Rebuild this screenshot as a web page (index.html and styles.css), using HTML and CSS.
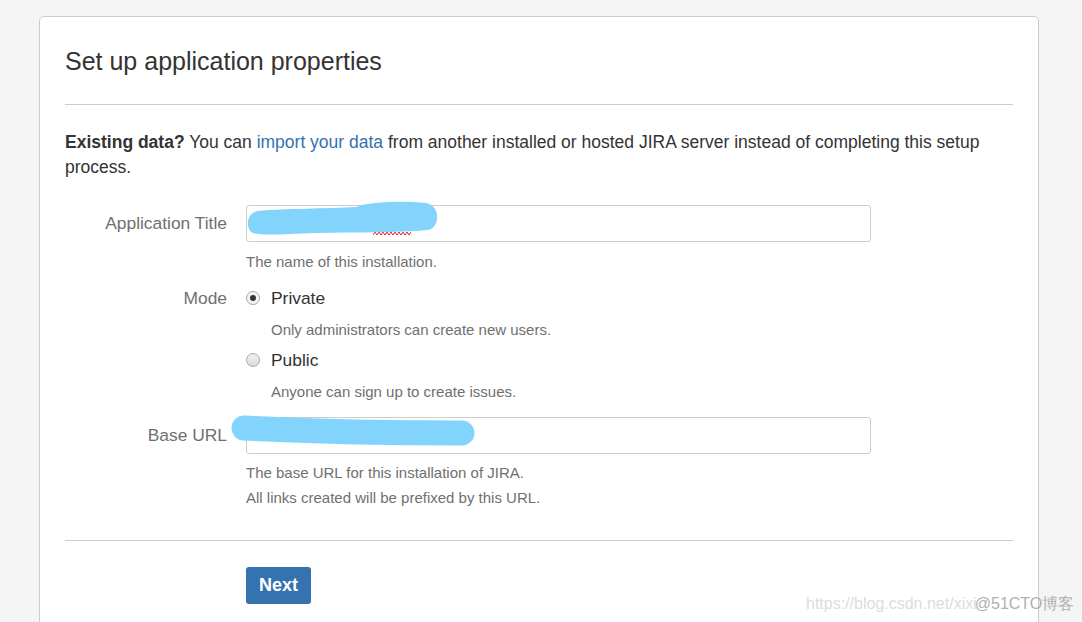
FILE: index.html
```html
<!DOCTYPE html>
<html lang="en">
<head>
  <meta charset="UTF-8">
  <title>Set up application properties</title>
  <link rel="stylesheet" href="styles.css">
</head>
<body>
  <div class="setup-card">
    <h1>Set up application properties</h1>
    <hr>
    <p class="intro"><strong>Existing data?</strong> You can <a href="#">import your data</a> from another installed or hosted JIRA server instead of completing this setup process.</p>

    <form class="setup-form">
      <div class="field">
        <label class="field-label" for="appTitle">Application Title</label>
        <div class="field-body">
          <div class="input-wrap">
            <input type="text" id="appTitle" class="text-input">
            <svg class="squiggle" width="40" height="6" viewBox="0 0 40 6">
              <polyline points="0,4 2,1 4,4 6,1 8,4 10,1 12,4 14,1 16,4 18,1 20,4 22,1 24,4 26,1 28,4 30,1 32,4 34,1 36,4 38,1" fill="none" stroke="#d22" stroke-width="1"/>
            </svg>
            <svg class="scribble scribble-title" width="200" height="40" viewBox="0 -5 200 40">
              <path d="M12 6 C40 3 80 4 110 2 C125 -4 160 -4 180 -2 C194 0 195 22 182 25 C150 28 110 27 70 28 C40 29 16 31 7 28 C-1 24 0 8 12 6 Z" fill="#82d4fc"/>
            </svg>
          </div>
          <div class="help">The name of this installation.</div>
        </div>
      </div>

      <div class="field field-mode">
        <span class="field-label label-mode">Mode</span>
        <div class="field-body">
          <label class="radio-option">
            <span class="radio checked"></span>
            <span>Private</span>
          </label>
          <div class="help option-help">Only administrators can create new users.</div>
          <label class="radio-option radio-second">
            <span class="radio"></span>
            <span>Public</span>
          </label>
          <div class="help option-help">Anyone can sign up to create issues.</div>
        </div>
      </div>

      <div class="field field-url">
        <label class="field-label" for="baseUrl">Base URL</label>
        <div class="field-body">
          <div class="input-wrap">
            <input type="text" id="baseUrl" class="text-input">
            <svg class="scribble scribble-url" width="260" height="40" viewBox="-20 -5 260 40">
              <path d="M-2 11 C60 14 150 16 216 16" fill="none" stroke="#82d4fc" stroke-width="25" stroke-linecap="round"/>
            </svg>
          </div>
          <div class="help help-url">The base URL for this installation of JIRA.<br>All links created will be prefixed by this URL.</div>
        </div>
      </div>

      <hr class="form-rule">
      <div class="buttons">
        <button type="button" class="btn-next">Next</button>
      </div>
    </form>
  </div>

  <div class="watermark">
    <span class="wm-url">https://blog.csdn.net/xixi</span><span class="wm-site">@51CTO博客</span>
  </div>
</body>
</html>
```

FILE: styles.css
```css
body {
  margin: 0;
  padding: 16px 0 0 39px;
  background-color: #f5f5f5;
  font-family: "Liberation Sans", Arial, sans-serif;
  color: #333;
  overflow: hidden;
  height: 606px;
}

.setup-card {
  box-sizing: border-box;
  width: 1000px;
  background-color: #fff;
  border: 1px solid #ccc;
  border-radius: 5px;
  padding: 29px 25px 40px 25px;
}

h1 {
  margin: 0;
  font-size: 25px;
  font-weight: normal;
  line-height: 30px;
  color: #333;
}

hr {
  border: none;
  border-top: 1px solid #ccc;
  margin: 28px 0 0 0;
}

.intro {
  margin: 25px 0 0 0;
  font-size: 17.5px;
  line-height: 25px;
}

.intro strong {
  font-weight: bold;
}

.intro a {
  color: #3572b0;
  text-decoration: none;
}

.setup-form {
  margin-top: 25px;
}

.field {
  display: grid;
  grid-template-columns: 162px 625px;
  column-gap: 19px;
}

.field-label {
  text-align: right;
  font-size: 17.4px;
  line-height: 37px;
  color: #707070;
}

.field-mode {
  margin-top: 14px;
}

.label-mode {
  line-height: 24px;
}

.field-url {
  margin-top: 15px;
}

.input-wrap {
  position: relative;
  height: 37px;
}

.text-input {
  box-sizing: border-box;
  width: 625px;
  height: 37px;
  border: 1px solid #ccc;
  border-radius: 3px;
  padding: 4px 8px;
  font-family: inherit;
  font-size: 17px;
  background: #fff;
}

.scribble {
  position: absolute;
  overflow: visible;
  pointer-events: none;
}

.scribble-title {
  left: 0;
  top: -5px;
}

.scribble-url {
  left: -20px;
  top: -5px;
}

.squiggle {
  position: absolute;
  left: 127px;
  top: 26px;
}

.help {
  margin-top: 10px;
  font-size: 15px;
  line-height: 20px;
  color: #707070;
}

.help-url {
  margin-top: 6px;
  line-height: 25px;
}

.radio-option {
  display: flex;
  align-items: center;
  font-size: 17.4px;
  line-height: 24px;
  color: #333;
}

.radio-second {
  margin-top: 8px;
}

.radio {
  box-sizing: border-box;
  width: 14px;
  height: 14px;
  margin: 0 11px 0 0;
  border: 1px solid #a9a9a9;
  border-radius: 50%;
  background: linear-gradient(#f0f0f0, #dcdcdc);
  position: relative;
}

.radio.checked {
  background: #f4f4f4;
}

.radio.checked::after {
  content: "";
  position: absolute;
  left: 3px;
  top: 3px;
  width: 6px;
  height: 6px;
  border-radius: 50%;
  background-color: #333;
}

.option-help {
  margin-left: 25px;
}

.form-rule {
  margin-top: 30px;
}

.buttons {
  margin: 26px 0 0 181px;
}

.btn-next {
  width: 65px;
  height: 37px;
  border: none;
  border-radius: 3px;
  background-color: #3572b0;
  color: #fff;
  font-family: inherit;
  font-size: 18px;
  font-weight: bold;
  cursor: pointer;
}

.watermark {
  position: absolute;
  left: 806px;
  top: 594px;
  font-size: 16px;
  white-space: nowrap;
}

.wm-url {
  color: #dcdcdc;
}

.wm-site {
  color: #b0b0b0;
  font-size: 16px;
  margin-left: -2px;
}
```
